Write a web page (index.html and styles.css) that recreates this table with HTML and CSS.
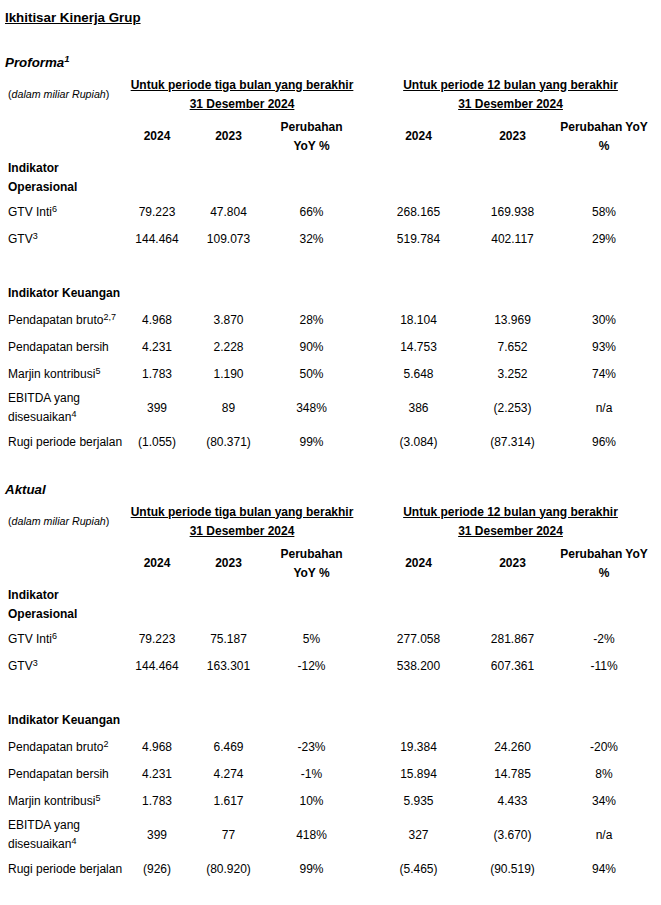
FILE: index.html
```html
<!DOCTYPE html>
<html lang="id">
<head>
<meta charset="utf-8">
<title>Ikhitisar Kinerja Grup</title>
<link rel="stylesheet" href="styles.css">
</head>
<body>
<div class="page">
  <p class="title">Ikhitisar Kinerja Grup</p>

  <p class="section">Proforma<sup>1</sup></p>
  <table class="kpi">
    <colgroup>
      <col class="w-label"><col class="w-1"><col class="w-2"><col class="w-3"><col class="w-4"><col class="w-5"><col class="w-6">
    </colgroup>
    <thead>
      <tr class="period">
        <td class="unit"><span class="paren">(</span>dalam miliar Rupiah<span class="paren">)</span></td>
        <th colspan="3" class="grp grp-1">Untuk periode tiga bulan yang berakhir<br>31 Desember 2024</th>
        <th colspan="3" class="grp grp-2">Untuk periode 12 bulan yang berakhir<br>31 Desember 2024</th>
      </tr>
      <tr class="years">
        <td></td>
        <th>2024</th><th>2023</th><th class="c3">Perubahan YoY %</th>
        <th class="c4">2024</th><th>2023</th><th class="c6">Perubahan YoY %</th>
      </tr>
    </thead>
    <tbody>
      <tr class="head"><th class="label">Indikator Operasional</th><td></td><td></td><td class="c3"></td><td class="c4"></td><td></td><td class="c6"></td></tr>
      <tr class="row"><td class="label">GTV Inti<sup>6</sup></td><td>79.223</td><td>47.804</td><td class="c3">66%</td><td class="c4">268.165</td><td>169.938</td><td class="c6">58%</td></tr>
      <tr class="row"><td class="label">GTV<sup>3</sup></td><td>144.464</td><td>109.073</td><td class="c3">32%</td><td class="c4">519.784</td><td>402.117</td><td class="c6">29%</td></tr>
      <tr class="row"><td class="label"></td><td></td><td></td><td class="c3"></td><td class="c4"></td><td></td><td class="c6"></td></tr>
      <tr class="row"><th class="label">Indikator Keuangan</th><td></td><td></td><td class="c3"></td><td class="c4"></td><td></td><td class="c6"></td></tr>
      <tr class="row"><td class="label">Pendapatan bruto<sup>2,7</sup></td><td>4.968</td><td>3.870</td><td class="c3">28%</td><td class="c4">18.104</td><td>13.969</td><td class="c6">30%</td></tr>
      <tr class="row"><td class="label">Pendapatan bersih</td><td>4.231</td><td>2.228</td><td class="c3">90%</td><td class="c4">14.753</td><td>7.652</td><td class="c6">93%</td></tr>
      <tr class="row"><td class="label">Marjin kontribusi<sup>5</sup></td><td>1.783</td><td>1.190</td><td class="c3">50%</td><td class="c4">5.648</td><td>3.252</td><td class="c6">74%</td></tr>
      <tr class="row"><td class="label">EBITDA yang<br>disesuaikan<sup>4</sup></td><td>399</td><td>89</td><td class="c3">348%</td><td class="c4">386</td><td>(2.253)</td><td class="c6">n/a</td></tr>
      <tr class="row"><td class="label">Rugi periode berjalan</td><td>(1.055)</td><td>(80.371)</td><td class="c3">99%</td><td class="c4">(3.084)</td><td>(87.314)</td><td class="c6">96%</td></tr>
    </tbody>
  </table>

  <p class="section">Aktual</p>
  <table class="kpi">
    <colgroup>
      <col class="w-label"><col class="w-1"><col class="w-2"><col class="w-3"><col class="w-4"><col class="w-5"><col class="w-6">
    </colgroup>
    <thead>
      <tr class="period">
        <td class="unit"><span class="paren">(</span>dalam miliar Rupiah<span class="paren">)</span></td>
        <th colspan="3" class="grp grp-1">Untuk periode tiga bulan yang berakhir<br>31 Desember 2024</th>
        <th colspan="3" class="grp grp-2">Untuk periode 12 bulan yang berakhir<br>31 Desember 2024</th>
      </tr>
      <tr class="years">
        <td></td>
        <th>2024</th><th>2023</th><th class="c3">Perubahan YoY %</th>
        <th class="c4">2024</th><th>2023</th><th class="c6">Perubahan YoY %</th>
      </tr>
    </thead>
    <tbody>
      <tr class="head"><th class="label">Indikator Operasional</th><td></td><td></td><td class="c3"></td><td class="c4"></td><td></td><td class="c6"></td></tr>
      <tr class="row"><td class="label">GTV Inti<sup>6</sup></td><td>79.223</td><td>75.187</td><td class="c3">5%</td><td class="c4">277.058</td><td>281.867</td><td class="c6">-2%</td></tr>
      <tr class="row"><td class="label">GTV<sup>3</sup></td><td>144.464</td><td>163.301</td><td class="c3">-12%</td><td class="c4">538.200</td><td>607.361</td><td class="c6">-11%</td></tr>
      <tr class="row"><td class="label"></td><td></td><td></td><td class="c3"></td><td class="c4"></td><td></td><td class="c6"></td></tr>
      <tr class="row"><th class="label">Indikator Keuangan</th><td></td><td></td><td class="c3"></td><td class="c4"></td><td></td><td class="c6"></td></tr>
      <tr class="row"><td class="label">Pendapatan bruto<sup>2</sup></td><td>4.968</td><td>6.469</td><td class="c3">-23%</td><td class="c4">19.384</td><td>24.260</td><td class="c6">-20%</td></tr>
      <tr class="row"><td class="label">Pendapatan bersih</td><td>4.231</td><td>4.274</td><td class="c3">-1%</td><td class="c4">15.894</td><td>14.785</td><td class="c6">8%</td></tr>
      <tr class="row"><td class="label">Marjin kontribusi<sup>5</sup></td><td>1.783</td><td>1.617</td><td class="c3">10%</td><td class="c4">5.935</td><td>4.433</td><td class="c6">34%</td></tr>
      <tr class="row"><td class="label">EBITDA yang<br>disesuaikan<sup>4</sup></td><td>399</td><td>77</td><td class="c3">418%</td><td class="c4">327</td><td>(3.670)</td><td class="c6">n/a</td></tr>
      <tr class="row"><td class="label">Rugi periode berjalan</td><td>(926)</td><td>(80.920)</td><td class="c3">99%</td><td class="c4">(5.465)</td><td>(90.519)</td><td class="c6">94%</td></tr>
    </tbody>
  </table>
</div>
</body>
</html>
```

FILE: styles.css
```css
html, body {
  margin: 0;
  padding: 0;
  background: #ffffff;
}

body {
  font-family: "Liberation Sans", Arial, sans-serif;
  font-size: 12px;
  color: #000000;
}

.page {
  padding: 8px 5px 0 5px;
}

.title {
  margin: 0;
  font-size: 13.33px;
  line-height: 19px;
  font-weight: bold;
  text-decoration: underline;
}

.section {
  margin: 26px 0 2px 0;
  font-size: 13.33px;
  line-height: 19px;
  font-weight: bold;
  font-style: italic;
}

.section sup {
  font-size: 9.5px;
  vertical-align: 5px;
}

sup {
  font-size: 9px;
  line-height: 0;
  vertical-align: 4px;
}

.kpi {
  width: 646px;
  table-layout: fixed;
  border-collapse: collapse;
  border-spacing: 0;
}

.w-label { width: 120px; }
.w-1 { width: 64px; }
.w-2 { width: 79px; }
.w-3 { width: 91px; }
.w-4 { width: 109px; }
.w-5 { width: 89px; }
.w-6 { width: 94px; }

.kpi th,
.kpi td {
  padding: 1.5px 2px;
  line-height: 19px;
  text-align: center;
  vertical-align: middle;
  font-weight: normal;
}

.kpi th {
  font-weight: bold;
}

.kpi .years th {
  padding-top: 2.5px;
  padding-bottom: 0.5px;
}

.kpi tbody td,
.kpi tbody th {
  padding-top: 3px;
  padding-bottom: 0;
}

.kpi .label {
  text-align: left;
  padding-left: 3px;
  padding-right: 0;
}

.kpi .c3 {
  padding-right: 6px;
}

.kpi .c4 {
  padding-left: 12px;
}

.kpi .c6 {
  padding-left: 1px;
  padding-right: 1px;
}

.kpi .unit {
  text-align: left;
  padding-left: 3px;
  padding-right: 0;
  font-size: 10.67px;
  font-style: italic;
  white-space: nowrap;
}

.unit .paren {
  font-style: normal;
}

.kpi .grp {
  text-decoration: underline;
}

.kpi .grp-2 {
  padding-left: 12px;
  padding-right: 1px;
}

.kpi tr.row {
  height: 27px;
}
```
